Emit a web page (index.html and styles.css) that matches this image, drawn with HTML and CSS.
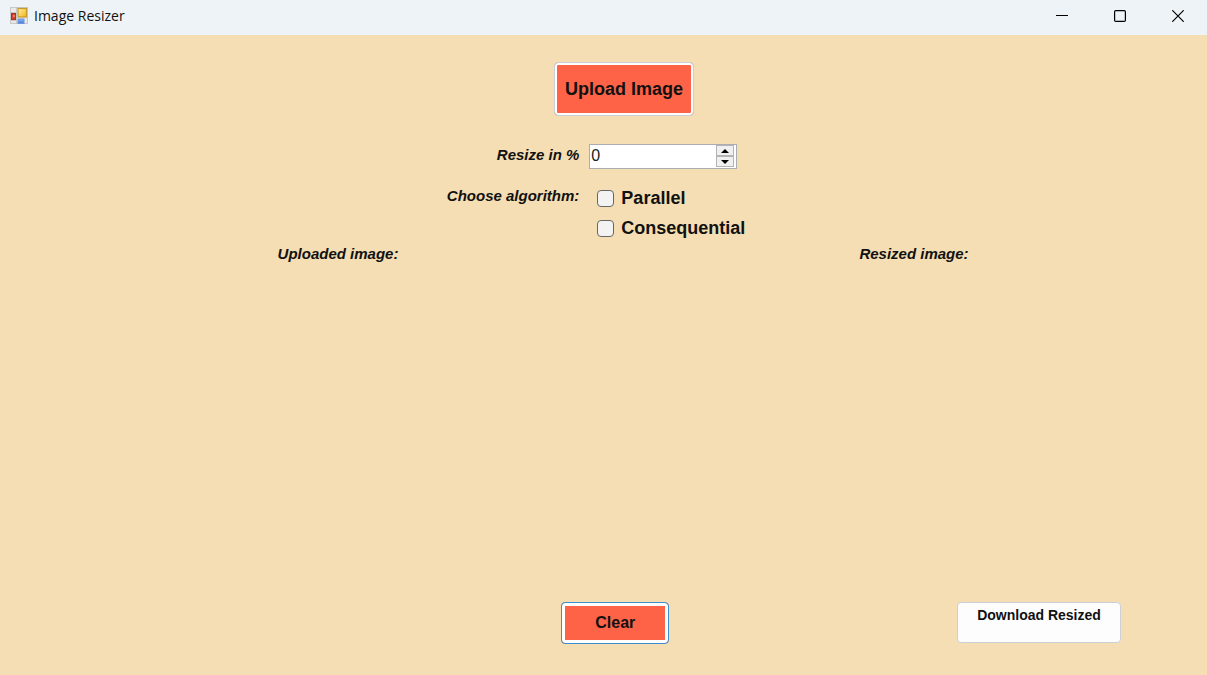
FILE: index.html
```html
<!DOCTYPE html>
<html lang="en">
<head>
<meta charset="utf-8">
<meta name="viewport" content="width=device-width, initial-scale=1">
<title>Image Resizer</title>
<link rel="stylesheet" href="styles.css">
</head>
<body>
<div class="window">
  <header class="titlebar">
    <svg class="app-icon" width="18" height="18" viewBox="0 0 18 18" aria-hidden="true">
      <defs>
        <linearGradient id="gold" x1="0" y1="0" x2="1" y2="1"><stop offset="0" stop-color="#fff0a0"/><stop offset="1" stop-color="#f0b41c"/></linearGradient>
        <linearGradient id="blue" x1="0" y1="0" x2="0" y2="1"><stop offset="0" stop-color="#8fb8f5"/><stop offset="1" stop-color="#3c74dc"/></linearGradient>
      </defs>
      <rect x="0.5" y="0.5" width="17" height="16" fill="#e9e9e9" stroke="#c8c8c8"/>
      <path d="M0 5.5h7M6.5 0v17M0 13.5h7" stroke="#c8c8c8" fill="none"/>
      <rect x="1.5" y="6.500" width="4" height="6" fill="#d0442e" stroke="#a83224"/>
      <rect x="3" y="8" width="2" height="2" fill="#e8806c"/>
      <rect x="8" y="1.500" width="8.500" height="8.500" fill="url(#gold)" stroke="#c89a2c" stroke-width="1.200"/>
      <rect x="8" y="12" width="6" height="4.500" fill="url(#blue)" stroke="#6c94dc"/>
    </svg>
    <h1 class="title">Image Resizer</h1>
    <div class="window-controls">
      <button class="window-button" type="button" aria-label="Minimize">
        <svg width="12" height="12" viewBox="0 0 12 12"><path d="M0 5.500h12" stroke="#000" fill="none"/></svg>
      </button>
      <button class="window-button" type="button" aria-label="Maximize">
        <svg width="12" height="12" viewBox="0 0 12 12"><rect x="0.600" y="0.600" width="10.800" height="10.800" rx="1.200" fill="none" stroke="#000" stroke-width="1.200"/></svg>
      </button>
      <button class="window-button" type="button" aria-label="Close">
        <svg width="12" height="12" viewBox="0 0 12 12"><path d="M0.300 0.300l11.400 11.400M11.700 0.300L0.300 11.700" stroke="#000" stroke-width="1.200" fill="none"/></svg>
      </button>
    </div>
  </header>
  <main class="content">
    <form class="form">
      <button class="button upload" type="button">Upload Image</button>
      <label class="caption percent-label" for="percent">Resize in %</label>
      <div class="spinner">
        <input class="spinner-input" id="percent" type="text" inputmode="numeric" value="0">
        <div class="spinner-buttons">
          <button class="step" type="button" aria-label="Increase"><svg width="8" height="4" viewBox="0 0 8 4"><path d="M0 4L4 0l4 4z"/></svg></button>
          <button class="step" type="button" aria-label="Decrease"><svg width="8" height="4" viewBox="0 0 8 4"><path d="M0 0h8L4 4z"/></svg></button>
        </div>
      </div>
      <span class="caption algorithm-label" id="algorithm">Choose algorithm:</span>
      <div class="options" role="group" aria-labelledby="algorithm">
        <label class="option"><input class="check" type="checkbox">Parallel</label>
        <label class="option"><input class="check" type="checkbox">Consequential</label>
      </div>
    </form>
    <section class="previews">
      <h2 class="caption">Uploaded image:</h2>
      <h2 class="caption">Resized image:</h2>
    </section>
    <footer class="actions">
      <button class="button clear" type="button">Clear</button>
      <button class="button download" type="button">Download Resized</button>
    </footer>
  </main>
</div>
</body>
</html>
```
FILE: styles.css
```css
* {
  box-sizing: border-box;
}

body {
  margin: 0;
  font-family: "Liberation Sans", Arial, sans-serif;
  color: #111;
}

.window {
  display: flex;
  flex-direction: column;
  min-height: 100vh;
  background: #f5deb3;
}

.titlebar {
  display: flex;
  align-items: center;
  height: 35px;
  padding: 0 0 4px 10px;
  background: #eef3f7;
}

.title {
  flex: 1;
  margin: 0 0 0 6px;
  font: 400 14px/20px "Open Sans", "Noto Sans", sans-serif;
}

.window-controls {
  display: flex;
}

.window-button {
  display: flex;
  align-items: center;
  justify-content: center;
  width: 58px;
  height: 31px;
  padding: 0;
  border: 0;
  background: transparent;
}

.content {
  display: flex;
  flex: 1;
  flex-direction: column;
  padding: 27px 0 31px;
}

.form {
  display: grid;
  grid-template-columns: 48% 1fr;
  column-gap: 10px;
}

.caption {
  margin: 0;
  font-size: 15px;
  font-style: italic;
  font-weight: 700;
  line-height: 20px;
}

.button {
  padding: 0;
  border: 1px solid #ccd0d6;
  border-radius: 4px;
  font-family: inherit;
  font-weight: 700;
  color: #111;
}

.upload {
  grid-column: 1 / -1;
  width: 140px;
  height: 54px;
  margin-left: 45.9%;
  margin-bottom: 28px;
  background: #ff6347;
  box-shadow: inset 0 0 0 2px #fff;
  font-size: 18px;
}

.percent-label,
.algorithm-label {
  justify-self: end;
}

.percent-label {
  margin-top: 1px;
}

.spinner {
  display: flex;
  width: 148px;
  height: 25px;
  border: 1px solid #abadb3;
  background: #fff;
}

.spinner-input {
  flex: 1;
  min-width: 0;
  padding: 0 1px 2px;
  border: 0;
  outline: 0;
  background: transparent;
  font: 16px "Liberation Sans", Arial, sans-serif;
  color: #222;
}

.spinner-buttons {
  display: flex;
  flex-direction: column;
  width: 20px;
  padding: 0 2px 1px 0;
}

.step {
  display: flex;
  flex: 1;
  align-items: center;
  justify-content: center;
  padding: 0;
  border: 1px solid #b4b4b4;
  background: #f0f0f0;
}

.algorithm-label {
  margin-top: 17px;
}

.options {
  display: flex;
  flex-direction: column;
  gap: 10px;
  padding: 19px 0 0 8px;
}

.option {
  display: flex;
  align-items: center;
  align-self: flex-start;
  gap: 7px;
  font-size: 18px;
  font-weight: 700;
  line-height: 20px;
}

.check {
  appearance: none;
  width: 17px;
  height: 17px;
  margin: 0;
  border: 1px solid #666;
  border-radius: 4px;
  background: #f3f3f3;
}

.check:checked {
  background: #0067c0;
}

.previews {
  display: grid;
  flex: 1;
  grid-template-columns: 62.6% 1fr;
  padding: 6px 0 0 23%;
}

.actions {
  display: grid;
  grid-template-columns: 46.5% 1fr auto;
}

.clear {
  grid-column: 2;
  justify-self: start;
  width: 108px;
  height: 42px;
  border: 1px solid #3c8fce;
  background: #ff6347;
  box-shadow: inset 0 0 0 3px #fff;
  font-size: 16px;
}

.download {
  display: flex;
  justify-content: center;
  width: 164px;
  height: 41px;
  margin-right: 86px;
  padding-top: 4px;
  background: #fdfdfd;
  font-size: 14px;
  line-height: 16px;
}
```
